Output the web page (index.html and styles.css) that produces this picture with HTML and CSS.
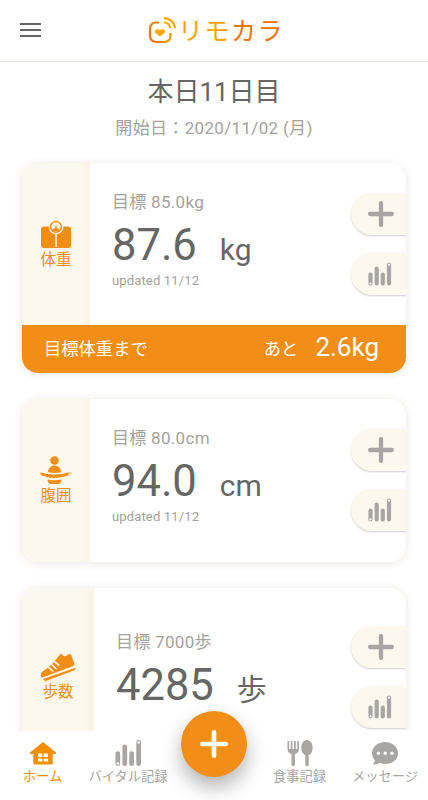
FILE: index.html
```html
<!DOCTYPE html>
<html lang="ja">
<head>
    <meta charset="UTF-8">
    <meta name="viewport" content="width=device-width, initial-scale=1.0">
    <title>リモカラ</title>
    <link rel="stylesheet" href="styles.css">
</head>
<body>
    <svg class="symbols">
        <symbol id="plus" viewBox="0 0 24 24">
            <path d="M12 2v20M2 12h20" fill="none" stroke="currentColor" stroke-width="4" stroke-linecap="round"/>
        </symbol>
        <symbol id="bars" viewBox="0 0 24 24">
            <path d="M2.500 12.500v9M8.700 6.500v15M14.800 12.500v9M21 2.500v19" fill="none" stroke="currentColor" stroke-width="4.200" stroke-linecap="round"/>
            <circle cx="2.500" cy="21.400" r="1.100" fill="#fff"/>
            <circle cx="21" cy="2.700" r="1.100" fill="#fff"/>
        </symbol>
    </svg>

    <header class="header">
        <button class="menu" aria-label="menu"><i></i><i></i><i></i></button>
        <div class="logo">
            <svg class="logo-mark" viewBox="0 0 30 28" fill="none" stroke-width="2.200" stroke-linecap="butt">
                <defs>
                    <linearGradient id="frame" x1="0" y1="0" x2="1" y2="1">
                        <stop offset="0" stop-color="#f08010"/>
                        <stop offset=".5" stop-color="#f07000"/>
                        <stop offset="1" stop-color="#f5a000"/>
                    </linearGradient>
                </defs>
                <path d="M11 6.500H8a6 6 0 0 0-6 6v7.500A6 6 0 0 0 8 26h8.500a6 6 0 0 0 6-6v-3" stroke="url(#frame)"/>
                <path d="M16 6.500a6.500 6.500 0 0 1 6.300 5.700M16 2.200a11 11 0 0 1 11 10" stroke="#f8a800"/>
                <path d="M12 20.500l-4.500-3.600c-2-2.600 1.900-5.200 4.500-2.600 2.600-2.600 6.500 0 4.500 2.600z" fill="#f8a800"/>
            </svg>
            <span class="logo-text"><b>リ</b><b>モ</b><b>カ</b><b>ラ</b></span>
        </div>
    </header>

    <main class="content">
        <h1>本日11日目</h1>
        <p class="start">開始日：2020/11/02 (月)</p>

        <section class="card">
            <div class="card-main">
                <div class="side">
                    <svg width="32" height="30" viewBox="0 0 32 30">
                        <rect x="1" y="6.500" width="30" height="21.500" rx="3" fill="#f28e16"/>
                        <path d="M16 13v14" stroke="#fdf8ed" stroke-width="1.500"/>
                        <circle cx="16" cy="6.800" r="7.400" fill="#fdf8ed"/>
                        <circle cx="16" cy="6.800" r="5.400" fill="#fdf8ed" stroke="#f28e16" stroke-width="1.500"/>
                        <path d="M12.200 9.500q3.800-3 7.600 0l-1.600 1.500h-4.400zM15 8.500l1-4.500 1 4.500z" fill="#f28e16"/>
                    </svg>
                    <span>体重</span>
                </div>
                <div class="data">
                    <p class="goal">目標 85.0kg</p>
                    <p class="value">87.6<small>kg</small></p>
                    <p class="updated">updated 11/12</p>
                </div>
                <div class="actions">
                    <button><svg class="i-plus"><use href="#plus"/></svg></button>
                    <button><svg class="i-bars"><use href="#bars"/></svg></button>
                </div>
            </div>
            <div class="remain">
                <span>目標体重まで</span>
                <span class="ato">あと</span>
                <strong>2.6kg</strong>
            </div>
        </section>

        <section class="card">
            <div class="card-main">
                <div class="side">
                    <svg width="32" height="30" viewBox="0 0 32 30" fill="#f28e16">
                        <circle cx="14.500" cy="4.500" r="4.300"/>
                        <path d="M7.800 16q1-6.500 6.700-6.500t6.700 6.500q-6.700 1.800-13.400 0zM7.500 23.500q7 1.500 14 0-.3 4-3 4.500h-8q-2.700-.5-3-4.500z"/>
                        <path d="M.5 16q14 4.500 28 0l.5 3q-14 6.500-28 .2z"/>
                        <path d="M28 16.500l3.500-.7v2l-3 1z" fill="#f9cc91"/>
                        <path d="M.8 16q13.700 4.300 27.400 0" fill="none" stroke="#fdf8ed" stroke-width=".8"/>
                        <path d="M5 20v1.500M8.500 21v1.500M12 21.500v1.500M15.500 21.500v1.500M19 21.500v1.500M22.500 21v1.500M26 20v1.500" stroke="#fdf8ed" stroke-width="1.100"/>
                    </svg>
                    <span>腹囲</span>
                </div>
                <div class="data">
                    <p class="goal">目標 80.0cm</p>
                    <p class="value">94.0<small>cm</small></p>
                    <p class="updated">updated 11/12</p>
                </div>
                <div class="actions">
                    <button><svg class="i-plus"><use href="#plus"/></svg></button>
                    <button><svg class="i-bars"><use href="#bars"/></svg></button>
                </div>
            </div>
        </section>

        <section class="card steps">
            <div class="card-main">
                <div class="side">
                    <svg width="36" height="29" viewBox="0 0 36 29" fill="#f28e16">
                        <path d="M.8 22.800q-.2-3.300 3-5.300Q11 13.500 17.500 4.500l2.500-3q1.500-1.500 2.500.5 1.700 3 6.300-.7 1.400-1 2.400.7 1.300 4 3.200 8.700.3 1.700-1.700 2.500L2.500 24.500Q1 24.800.8 22.800z"/>
                        <path d="M3 26L35.500 14.800q.5 1.900-1.700 2.700L6.500 27.800Q4.200 28.500 3 26z"/>
                        <path d="M8.500 14.300l4.300 3.900M11.500 11.500l4.300 3.900M14.300 8.300l4.400 3.800" stroke="#fdf8ed" stroke-width="1.600" stroke-linecap="round"/>
                    </svg>
                    <span>歩数</span>
                </div>
                <div class="data">
                    <p class="goal">目標 7000歩</p>
                    <p class="value">4285<small>歩</small></p>
                </div>
                <div class="actions">
                    <button><svg class="i-plus"><use href="#plus"/></svg></button>
                    <button><svg class="i-bars"><use href="#bars"/></svg></button>
                </div>
            </div>
        </section>
    </main>

    <nav class="nav">
        <a class="active">
            <svg width="28" height="28" viewBox="0 0 28 28">
                <path d="M14 3L1 13.500V15h3.300v9q0 1.500 1.500 1.500h16.400q1.500 0 1.500-1.500v-9H27v-1.500z" fill="#f39000"/>
                <path d="M9 14.500h4.300V18H9zM14.700 14.500H19V18h-4.300zM9 19.400h4.300v3H9zM14.700 19.400H19v3h-4.300z" fill="#fff"/>
            </svg>
            <span>ホーム</span>
        </a>
        <a>
            <svg width="27" height="28"><use href="#bars"/></svg>
            <span>バイタル記録</span>
        </a>
        <button class="fab"><svg><use href="#plus"/></svg></button>
        <a>
            <svg width="28" height="28" viewBox="0 0 28 28" fill="currentColor">
                <path d="M1.500 2v8q0 4 4 5v10.500q0 1.700 1.700 1.700t1.700-1.700V15q4-1 4-5V2h-1.600v8h-1.600V2H8v8H6.400V2H4.700v8H3.100V2z"/>
                <path d="M21 1c-7.200 0-7.200 13.500-1.700 15v9.500q0 1.700 1.700 1.700t1.700-1.700V16C28.200 14.500 28.200 1 21 1z"/>
            </svg>
            <span>食事記録</span>
        </a>
        <a>
            <svg width="28" height="28" viewBox="0 0 28 28">
                <path d="M14 3C6.500 3 1 8 1 14.200q0 4.300 3 7.300-.5 2.400-2.600 4.100 4.600.2 7.600-1.600 2.300 1 5 1c7.500 0 13-4.600 13-10.800S21.500 3 14 3z" fill="currentColor"/>
                <g fill="#fff"><circle cx="7.500" cy="14.300" r="1.700"/><circle cx="14.200" cy="14.300" r="1.700"/><circle cx="21" cy="14.300" r="1.700"/></g>
            </svg>
            <span>メッセージ</span>
        </a>
    </nav>
</body>
</html>
```

FILE: styles.css
```css
* {
    box-sizing: border-box;
}
body {
    margin: 0;
    height: 100vh;
    display: flex;
    flex-direction: column;
    overflow: hidden;
    background: #fff;
    color: #666664;
    font-family: Roboto, "Noto Sans CJK JP", sans-serif;
    font-weight: 400;
}
h1, p {
    margin: 0;
    font-weight: 400;
    white-space: nowrap;
}
button {
    padding: 0;
    border: none;
    background: none;
    color: inherit;
}
svg {
    display: block;
}
.symbols {
    display: none;
}
.header {
    flex: none;
    height: 62px;
    display: grid;
    grid-template-columns: 148px 1fr;
    border-bottom: 1px solid #efe5e0;
}
.menu {
    display: flex;
    flex-direction: column;
    gap: 4px;
    padding: 23px 0 0 20px;
}
.menu i {
    width: 21px;
    height: 2px;
    background: #666;
}
.logo {
    display: flex;
    padding-top: 16px;
}
.logo-mark {
    width: 30px;
    height: 28px;
}
.logo-text {
    display: flex;
    padding-top: 2px;
    line-height: 28px;
    font-size: 25px;
}
.logo-text b {
    width: 26.5px;
    font-weight: 400;
    color: #f8a400;
}
.logo-text b:nth-child(n+3) {
    color: #f27200;
}
.content {
    flex: 1;
    min-height: 0;
    overflow: hidden;
    display: flex;
    flex-direction: column;
    padding: 12px 22px 0;
}
h1 {
    font-size: 26px;
    line-height: 36px;
    text-align: center;
}
.start {
    margin-top: 6px;
    font-size: 17px;
    line-height: 24px;
    letter-spacing: 0.33px;
    text-align: center;
    color: #a5a19d;
}
.card {
    flex: none;
    margin-top: 26px;
    overflow: hidden;
    border-radius: 16px;
    background: #fff;
    box-shadow: 0 1px 8px rgba(120, 80, 50, 0.14);
}
.start + .card {
    margin-top: 22.5px;
}
.card-main {
    height: 162.5px;
    display: grid;
    grid-template-columns: 68px 1fr 55px;
}
.side {
    display: flex;
    flex-direction: column;
    align-items: center;
    padding-top: 57px;
    background: linear-gradient(to right, #fdf8ed 85%, #fcf2e6 100%);
    color: #f28e16;
}
.side span {
    font-size: 15.5px;
    line-height: 20px;
}
.data {
    padding: 26px 0 0 22px;
}
.goal {
    font-size: 17px;
    line-height: 26px;
    letter-spacing: 0.3px;
    color: #a5a19d;
}
.value {
    font-size: 43.5px;
    line-height: 54px;
    padding-top: 4px;
}
.value small {
    margin-left: 23px;
    font-size: 30px;
}
.updated {
    margin-top: -7px;
    font-size: 13px;
    line-height: 22px;
    letter-spacing: 0.15px;
    color: #a5a19d;
}
.actions {
    display: flex;
    flex-direction: column;
    gap: 18px;
    padding-top: 30px;
}
.actions button {
    height: 42px;
    display: flex;
    align-items: center;
    padding-left: 17px;
    border-radius: 21px 0 0 21px;
    background: #fdf8ed;
    box-shadow: 0 1px 2px rgba(0, 0, 0, 0.2);
    color: #a8a5a2;
}
.i-plus {
    width: 26px;
    height: 26px;
}
.i-bars {
    width: 24px;
    height: 24px;
}
.remain {
    height: 48px;
    display: flex;
    align-items: center;
    padding: 0 27px 4px 22px;
    background: #f28e16;
    color: #fff;
    font-size: 17.3px;
}
.ato {
    margin-left: auto;
}
.remain strong {
    margin-left: 17px;
    font-size: 26px;
    font-weight: 400;
}
.steps .card-main {
    height: 180px;
    grid-template-columns: 72px 1fr 55px;
}
.steps .side {
    padding-top: 65px;
}
.steps .data {
    padding-top: 41px;
}
.steps .actions {
    padding-top: 38px;
}
.nav {
    flex: none;
    position: relative;
    height: 69px;
    display: grid;
    grid-template-columns: 85px 86px 86px 85px 86px;
    background: #fff;
    color: #a8a5a2;
}
.nav a {
    display: flex;
    flex-direction: column;
    align-items: center;
    padding-top: 8px;
    white-space: nowrap;
}
.nav a span {
    font-size: 13.3px;
    line-height: 20px;
}
.nav .active {
    color: #f39000;
}
.fab {
    width: 66px;
    height: 66px;
    margin: -20px auto 0;
    display: flex;
    align-items: center;
    justify-content: center;
    border-radius: 50%;
    background: #f28e16;
    box-shadow: 0 10px 20px rgba(0, 0, 0, 0.3);
    color: #fff;
}
.fab svg {
    width: 28px;
    height: 28px;
}
```
